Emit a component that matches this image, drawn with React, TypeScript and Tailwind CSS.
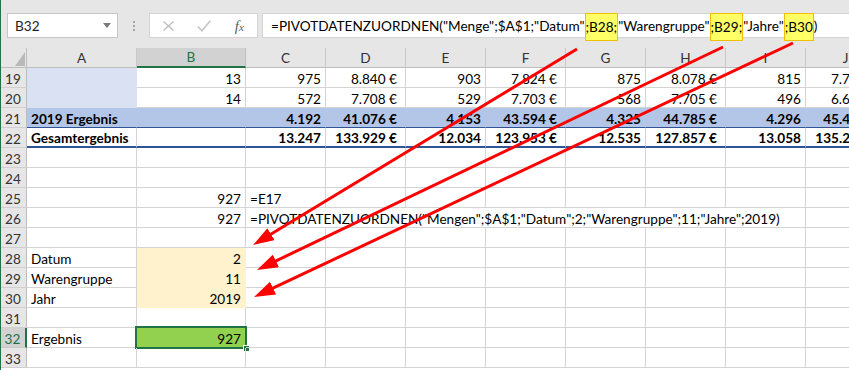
import React from 'react';

type Spec = { t?: string; k?: 'n' | 'e' | 'l'; cls?: string; sel?: boolean };
const n = (t: string, cls?: string): Spec => ({ t, k: 'n', cls });
const e = (t: string, cls?: string): Spec => ({ t, k: 'e', cls });
const l = (t: string, cls?: string): Spec => ({ t, k: 'l', cls });
const X = (cls?: string): Spec => ({ cls });

const W = ['w-[110px]', 'w-[109px]', 'w-[80px]', 'w-[80px]', 'w-[80px]', 'w-[80px]', 'w-[80px]', 'w-[80px]', 'w-[80px]', 'w-[80px]'];
const LETTERS = ['A', 'B', 'C', 'D', 'E', 'F', 'G', 'H', 'I', 'J'];

const DEF = 'border-r border-b border-[#d4d4d4]';
const BLUE_A = 'bg-[#d9e1f2] border-r border-b border-[#d9e1f2]';
const R21 = 'bg-[#b4c6e7] font-bold border-r border-b border-r-[#b4c6e7] border-b-[#2f5597]';
const R22 = 'font-bold border-r border-b-2 border-r-[#d4d4d4] border-b-[#2f5597]';
const YEL = 'bg-[#fff2cc] border-r border-b border-[#fff2cc]';
const GRN = 'bg-[#92d050] border-r border-b border-[#92d050]';
const OVF = 'border-b border-[#d4d4d4]';

const rows: { num: number; cells: Spec[]; sel?: boolean }[] = [
  { num: 19, cells: [X(BLUE_A), n('13'), n('975'), e('8.840 €'), n('903'), e('7.824 €'), n('875'), e('8.078 €'), n('815'), e('7.712 €')] },
  { num: 20, cells: [X(BLUE_A), n('14'), n('572'), e('7.708 €'), n('529'), e('7.703 €'), n('568'), e('7.705 €'), n('496'), e('6.612 €')] },
  { num: 21, cells: [l('2019 Ergebnis', R21), X(R21), n('4.192', R21), e('41.076 €', R21), n('4.153', R21), e('43.594 €', R21), n('4.325', R21), e('44.785 €', R21), n('4.296', R21), e('45.402 €', R21)] },
  { num: 22, cells: [l('Gesamtergebnis', R22), X(R22), n('13.247', R22), e('133.929 €', R22), n('12.034', R22), e('123.953 €', R22), n('12.535', R22), e('127.857 €', R22), n('13.058', R22), e('135.211 €', R22)] },
  { num: 23, cells: [X(), X(), X(), X(), X(), X(), X(), X(), X(), X()] },
  { num: 24, cells: [X(), X(), X(), X(), X(), X(), X(), X(), X(), X()] },
  { num: 25, cells: [X(), n('927'), l('=E17', 'border-r border-b border-[#d4d4d4] pl-[2px]'), X(), X(), X(), X(), X(), X(), X()] },
  { num: 26, cells: [X(), n('927'), l('=PIVOTDATENZUORDNEN("Mengen";$A$1;"Datum";2;"Warengruppe";11;"Jahre";2019)', 'border-b border-[#d4d4d4] pl-[2px]'), X(OVF), X(OVF), X(OVF), X(OVF), X(OVF), X(), X()] },
  { num: 27, cells: [X(), X(), X(), X(), X(), X(), X(), X(), X(), X()] },
  { num: 28, cells: [l('Datum'), n('2', YEL), X(), X(), X(), X(), X(), X(), X(), X()] },
  { num: 29, cells: [l('Warengruppe'), n('11', YEL), X(), X(), X(), X(), X(), X(), X(), X()] },
  { num: 30, cells: [l('Jahr'), n('2019', YEL), X(), X(), X(), X(), X(), X(), X(), X()] },
  { num: 31, cells: [X(), X(), X(), X(), X(), X(), X(), X(), X(), X()] },
  { num: 32, sel: true, cells: [l('Ergebnis'), { t: '927', k: 'n', cls: GRN, sel: true }, X(), X(), X(), X(), X(), X(), X(), X()] },
  { num: 33, cells: [X(), X(), X(), X(), X(), X(), X(), X(), X(), X()] },
];

function RowHeader({ num, sel }: { num: number; sel?: boolean }) {
  return (
    <div
      className={`w-[27px] shrink-0 h-full box-border flex items-end justify-center leading-[16px] ${
        sel
          ? 'bg-[#d2d2d2] text-[#217346] border-r-2 border-b border-r-[#217346] border-b-[#c8c8c8]'
          : 'bg-[#e6e6e6] text-[#333] border-r border-b border-r-[#bdbdbd] border-b-[#d0d0d0]'
      }`}
    >
      {num}
    </div>
  );
}

function GridRow({ num, cells, sel }: { num: number; cells: Spec[]; sel?: boolean }) {
  return (
    <div className="flex h-[20px]">
      <RowHeader num={num} sel={sel} />
      {cells.map((c, i) => (
        <div
          key={i}
          className={`relative shrink-0 h-full box-border flex items-end leading-[16px] whitespace-nowrap ${W[i]} ${
            c.k === 'n' ? 'justify-end pr-[4px]' : c.k === 'e' ? 'justify-end pr-[8px]' : 'justify-start pl-[4px]'
          } ${c.cls ?? DEF}`}
        >
          {c.t}
          {c.sel && (
            <>
              <div className="absolute left-[-2px] top-[-2px] right-[-2px] bottom-[-2px] border-2 border-[#217346]" />
              <div className="absolute right-[-5px] bottom-[-5px] w-[7px] h-[7px] bg-[#217346] border border-white" />
            </>
          )}
        </div>
      ))}
    </div>
  );
}

function ColHeaders() {
  return (
    <div className="flex h-[20px]">
      <div className="relative w-[27px] shrink-0 h-full box-border bg-[#e6e6e6] border-r border-b border-r-[#bdbdbd] border-b-[#bdbdbd]">
        <svg className="absolute left-[15px] top-[4px]" width="10" height="14" viewBox="0 0 10 14">
          <polygon points="10,0 10,14 0,14" fill="#b9b9b9" />
        </svg>
      </div>
      {LETTERS.map((L, i) => (
        <div
          key={L}
          className={`shrink-0 h-full box-border flex items-end justify-center leading-[17px] ${W[i]} ${
            L === 'B'
              ? 'bg-[#d2d2d2] text-[#217346] border-r border-b-2 border-r-[#bdbdbd] border-b-[#217346]'
              : 'bg-[#e6e6e6] text-[#333] border-r border-b border-r-[#c8c8c8] border-b-[#bdbdbd]'
          }`}
        >
          {L}
        </div>
      ))}
    </div>
  );
}

function Hl({ children }: { children: React.ReactNode }) {
  return (
    <span className="self-start -mt-[1px] h-[28px] box-border bg-[#ffff66] border border-[#f0c000] pt-[3.5px] leading-[18px]">
      {children}
    </span>
  );
}

function TopBar() {
  return (
    <div className="h-[48px] bg-[#e6e6e6] flex items-start pt-[13px] pl-[7px]">
      <div className="w-[111px] h-[25px] shrink-0 box-border bg-white border border-[#c6c6c6] flex items-center justify-between pl-[7px] pr-[6px] text-[#222]">
        <span className="leading-[18px]">B32</span>
        <svg width="8" height="5" viewBox="0 0 8 5">
          <polygon points="0,0 8,0 4,5" fill="#7a7a7a" />
        </svg>
      </div>
      <div className="w-[31px] h-[25px] shrink-0 flex flex-col items-center justify-center gap-[2px]">
        <div className="w-[2px] h-[2px] bg-[#a6a6a6]" />
        <div className="w-[2px] h-[2px] bg-[#a6a6a6]" />
        <div className="w-[2px] h-[2px] bg-[#a6a6a6]" />
      </div>
      <div className="w-[109px] h-[25px] shrink-0 box-border bg-white border border-[#d4d4d4] flex pl-[1px]">
        <div className="w-[36px] h-full flex items-center justify-center">
          <svg width="11" height="10" viewBox="0 0 11 10">
            <line x1="0.5" y1="0.5" x2="10.5" y2="9.5" stroke="#bdbdbd" strokeWidth="1.3" />
            <line x1="10.5" y1="0.5" x2="0.5" y2="9.5" stroke="#bdbdbd" strokeWidth="1.3" />
          </svg>
        </div>
        <div className="w-[36px] h-full flex items-center justify-center">
          <svg width="14" height="12" viewBox="0 0 14 12">
            <polyline points="0.8,6.5 5,10.8 13.3,0.8" fill="none" stroke="#c4c4c4" strokeWidth="1.6" />
          </svg>
        </div>
        <div className="w-[36px] h-full flex items-center justify-center text-[#606060] font-['Liberation_Serif',serif] italic">
          <span className="text-[15px] leading-[18px]">f</span>
          <span className="text-[11px] leading-[18px] mt-[3px]">x</span>
        </div>
      </div>
      <div className="ml-[4px] w-[620px] h-[25px] shrink-0 box-border bg-white border border-[#d4d4d4] flex items-center pl-[8px] whitespace-nowrap">
        <span className="leading-[18px]">=PIVOTDATENZUORDNEN("Menge";$A$1;"Datum"</span>
        <Hl>;B28;</Hl>
        <span className="leading-[18px]">"Warengruppe"</span>
        <Hl>;B29;</Hl>
        <span className="leading-[18px]">"Jahre"</span>
        <Hl>;B30</Hl>
        <span className="leading-[18px]">)</span>
      </div>
    </div>
  );
}

function Arrows() {
  return (
    <svg className="absolute left-0 top-0 pointer-events-none" width="849" height="370" viewBox="0 0 849 370">
      <defs>
        <marker id="ah" markerWidth="21" markerHeight="14" refX="9" refY="7" orient="auto" markerUnits="userSpaceOnUse">
          <path d="M0,0 L21,7 L0,14 z" fill="#ff0000" />
        </marker>
      </defs>
      <line x1="577" y1="49" x2="263.3" y2="238.8" stroke="#ff0000" strokeWidth="3" markerEnd="url(#ah)" />
      <line x1="723" y1="47" x2="267.8" y2="264.8" stroke="#ff0000" strokeWidth="3" markerEnd="url(#ah)" />
      <line x1="793" y1="43" x2="264.9" y2="291.9" stroke="#ff0000" strokeWidth="3" markerEnd="url(#ah)" />
    </svg>
  );
}

export default function App() {
  return (
    <div className="relative w-[849px] h-[370px] overflow-hidden bg-white font-['Lato',sans-serif] text-[13.6px] text-black">
      <TopBar />
      <ColHeaders />
      {rows.map((r) => (
        <GridRow key={r.num} num={r.num} cells={r.cells} sel={r.sel} />
      ))}
      <Arrows />
      <div className="absolute left-0 top-0 bottom-0 w-[1px] bg-[#217346]" />
    </div>
  );
}
